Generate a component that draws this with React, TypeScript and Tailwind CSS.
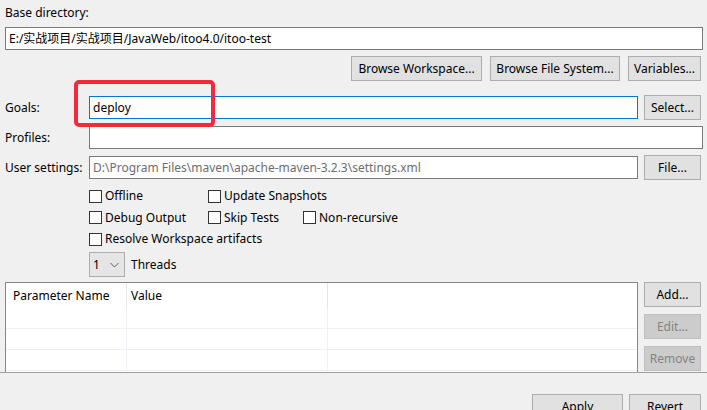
import React from "react";

const font = { fontFamily: '"Noto Sans", "Noto Sans CJK SC", sans-serif' };

const Btn = ({
  label,
  w,
  disabled,
  h = "h-[25px]",
}: {
  label: string;
  w: string;
  disabled?: boolean;
  h?: string;
}) => (
  <div
    className={`${w} ${h} shrink-0 flex items-center justify-center border text-[12px] ${
      disabled
        ? "bg-[#cccccc] border-[#bfbfbf] text-[#838383]"
        : "bg-[#e1e1e1] border-[#adadad] text-black"
    }`}
  >
    {label}
  </div>
);

const Input = ({
  value,
  className = "",
  muted,
  focused,
}: {
  value?: string;
  className?: string;
  muted?: boolean;
  focused?: boolean;
}) => (
  <div
    className={`h-[23px] bg-white border flex items-center px-[3px] text-[12px] whitespace-nowrap overflow-hidden ${
      focused ? "border-[#0078d7]" : "border-[#7a7a7a]"
    } ${muted ? "text-[#6d6d6d]" : "text-black"} ${className}`}
  >
    {value}
  </div>
);

const Check = ({ label, w }: { label: string; w?: string }) => (
  <div className={`flex items-center gap-[3px] ${w ?? ""}`}>
    <div className="w-[13px] h-[13px] bg-white border border-[#333333] shrink-0" />
    <span className="text-[12px] text-black whitespace-nowrap">{label}</span>
  </div>
);

export default function App() {
  return (
    <div style={font} className="w-[707px] h-[410px] bg-[#f0f0f0] overflow-hidden">
      {/* Scrolling main form */}
      <div className="h-[373px] border-b border-[#a0a0a0] overflow-hidden pl-[5px] pr-[4px]">
        <div className="pt-[5px] h-[21px] leading-[16px] text-[12px] text-black">Base directory:</div>
        <Input value="E:/实战项目/实战项目/JavaWeb/itoo4.0/itoo-test" className="mt-[6px]" />

        <div className="mt-[6px] flex justify-end gap-[8px] pr-[2px]">
          <Btn label="Browse Workspace..." w="w-[131px]" />
          <Btn label="Browse File System..." w="w-[130px]" />
          <Btn label="Variables..." w="w-[73px]" />
        </div>

        {/* Goals */}
        <div className="relative mt-[14px] h-[25px] flex items-center pr-[2px]">
          <span className="w-[84px] text-[12px] text-black">Goals:</span>
          <Input value="deploy" focused className="flex-1 mr-[6px]" />
          <Btn label="Select..." w="w-[57px]" h="h-[25px]" />
          <div className="absolute left-[69px] top-[-15px] w-[141px] h-[47px] border-[4px] border-[#f42a3c] rounded-[5px]" />
        </div>

        {/* Profiles */}
        <div className="mt-[5px] h-[25px] flex items-center">
          <span className="w-[84px] text-[12px] text-black">Profiles:</span>
          <Input className="flex-1" />
        </div>

        {/* User settings */}
        <div className="mt-[5px] h-[25px] flex items-center pr-[2px]">
          <span className="w-[84px] text-[12px] text-black">User settings:</span>
          <Input
            value="D:\Program Files\maven\apache-maven-3.2.3\settings.xml"
            muted
            className="flex-1 mr-[6px]"
          />
          <Btn label="File..." w="w-[57px]" />
        </div>

        {/* Options */}
        <div className="mt-[5px] pl-[84px] flex flex-col">
          <div className="h-[22px] flex items-center">
            <Check label="Offline" w="w-[119px]" />
            <Check label="Update Snapshots" />
          </div>
          <div className="h-[21px] flex items-center">
            <Check label="Debug Output" w="w-[119px]" />
            <Check label="Skip Tests" w="w-[95px]" />
            <Check label="Non-recursive" />
          </div>
          <div className="h-[22px] flex items-center">
            <Check label="Resolve Workspace artifacts" />
          </div>
          <div className="mt-[2px] h-[25px] flex items-center gap-[6px]">
            <div className="w-[36px] h-[25px] bg-[#e5e5e5] border border-[#adadad] flex items-center justify-between pl-[3px] pr-[5px] text-[12px] text-black">
              <span>1</span>
              <svg width="9" height="6" viewBox="0 0 9 6" className="mt-[1px]">
                <path d="M0.5 1 L4.5 5 L8.5 1" fill="none" stroke="#606060" strokeWidth="1" />
              </svg>
            </div>
            <span className="text-[12px] text-black">Threads</span>
          </div>
        </div>

        {/* Parameters table */}
        <div className="mt-[5px] flex items-start">
          <div className="w-[633px] h-[120px] bg-white border border-[#828790] flex flex-col">
            <div className="h-[25px] flex text-[12px] text-black shrink-0">
              <div className="w-[121px] border-r border-[#e5e5e5] pl-[7px] flex items-center">Parameter Name</div>
              <div className="w-[201px] border-r border-[#e5e5e5] pl-[4px] flex items-center">Value</div>
              <div className="flex-1" />
            </div>
            {[0, 1, 2, 3].map((i) => (
              <div key={i} className="h-[21px] flex border-b border-[#f0f0f0] shrink-0">
                <div className="w-[121px] border-r border-[#eef2f8]" />
                <div className="w-[201px] border-r border-[#eef2f8]" />
                <div className="flex-1" />
              </div>
            ))}
          </div>
          <div className="ml-[6px] flex flex-col gap-[7px]">
            <Btn label="Add..." w="w-[57px]" />
            <Btn label="Edit..." w="w-[57px]" disabled />
            <Btn label="Remove" w="w-[57px]" disabled />
          </div>
        </div>
      </div>

      {/* Bottom buttons */}
      <div className="pt-[21px] pr-[6px] flex justify-end gap-[6px]">
        <Btn label="Apply" w="w-[91px]" />
        <Btn label="Revert" w="w-[72px]" />
      </div>
    </div>
  );
}
